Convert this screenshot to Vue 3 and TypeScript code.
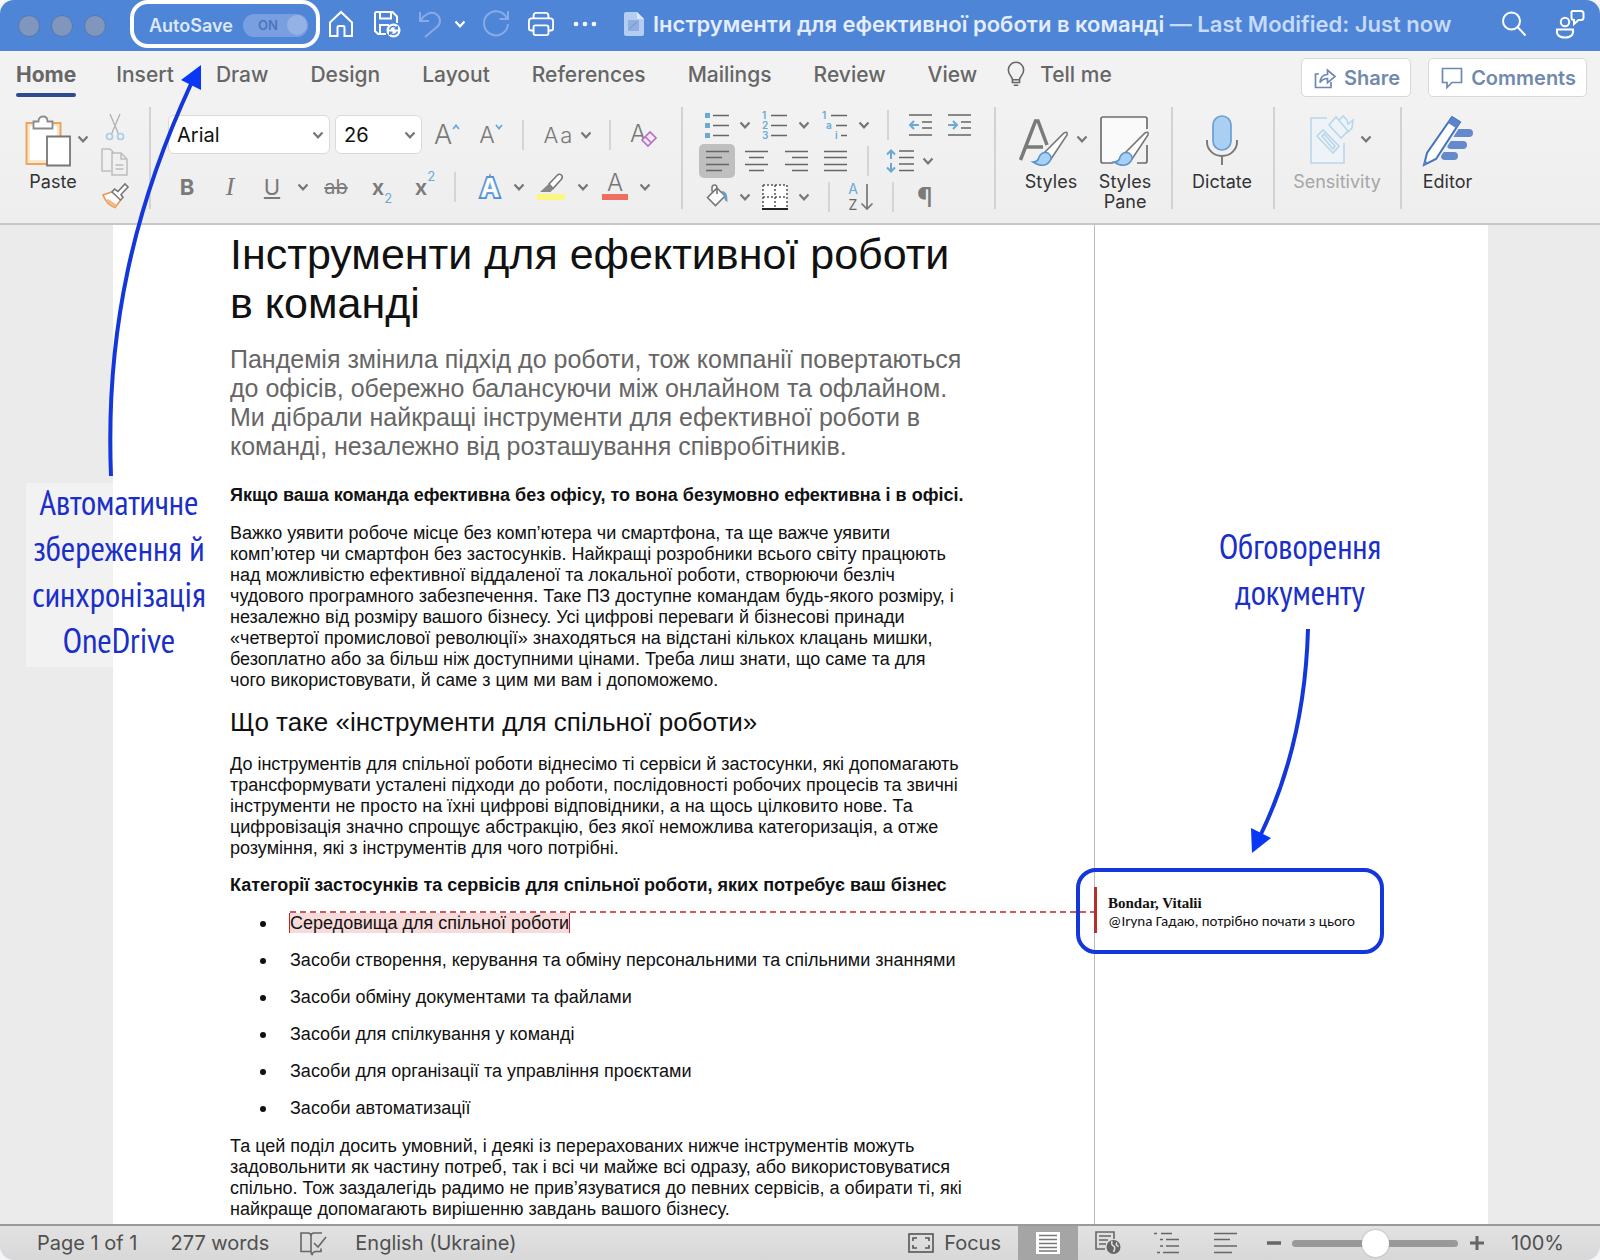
<script setup lang="ts">
import { h, ref } from 'vue'

const Chevron = () =>
  h('svg', { class: 'chevron', viewBox: '0 0 12 8', width: 12, height: 8, 'aria-hidden': 'true' }, [
    h('path', { d: 'M1.5 1.5 6 6.3 10.5 1.5', fill: 'none', stroke: 'currentColor', 'stroke-width': 2.2 }),
  ])

const autoSave = ref(true)
const font = ref('Arial')
const size = ref('26')
const zoom = ref(50)

const tabs = ['Home', 'Insert', 'Draw', 'Design', 'Layout', 'References', 'Mailings', 'Review', 'View']

const lead = [
  'Пандемія змінила підхід до роботи, тож компанії повертаються',
  'до офісів, обережно балансуючи між онлайном та офлайном.',
  'Ми дібрали найкращі інструменти для ефективної роботи в',
  'команді, незалежно від розташування співробітників.',
]
const intro = [
  'Важко уявити робоче місце без комп’ютера чи смартфона, та ще важче уявити',
  'комп’ютер чи смартфон без застосунків. Найкращі розробники всього світу працюють',
  'над можливістю ефективної віддаленої та локальної роботи, створюючи безліч',
  'чудового програмного забезпечення. Таке ПЗ доступне командам будь-якого розміру, і',
  'незалежно від розміру вашого бізнесу. Усі цифрові переваги й бізнесові принади',
  '«четвертої промислової революції» знаходяться на відстані кількох клацань мишки,',
  'безоплатно або за більш ніж доступними цінами. Треба лиш знати, що саме та для',
  'чого використовувати, й саме з цим ми вам і допоможемо.',
]
const tools = [
  'До інструментів для спільної роботи віднесімо ті сервіси й застосунки, які допомагають',
  'трансформувати усталені підходи до роботи, послідовності робочих процесів та звичні',
  'інструменти не просто на їхні цифрові відповідники, а на щось цілковито нове. Та',
  'цифровізація значно спрощує абстракцію, без якої неможлива категоризація, а отже',
  'розуміння, які з інструментів для чого потрібні.',
]
const categories = [
  'Засоби створення, керування та обміну персональними та спільними знаннями',
  'Засоби обміну документами та файлами',
  'Засоби для спілкування у команді',
  'Засоби для організації та управління проєктами',
  'Засоби автоматизації',
]
const outro = [
  'Та цей поділ досить умовний, і деякі із перерахованих нижче інструментів можуть',
  'задовольнити як частину потреб, так і всі чи майже всі одразу, або використовуватися',
  'спільно. Тож заздалегідь радимо не прив’язуватися до певних сервісів, а обирати ті, які',
  'найкраще допомагають вирішенню завдань вашого бізнесу.',
]
</script>

<template>
  <div class="window">
    <header class="titlebar">
      <div class="lights">
        <button aria-label="Close"></button>
        <button aria-label="Minimize"></button>
        <button aria-label="Zoom"></button>
      </div>
      <label class="autosave">
        <span>AutoSave</span>
        <span class="toggle">
          <input v-model="autoSave" type="checkbox" />
          <span class="on">ON</span>
          <span class="knob"></span>
        </span>
      </label>
      <div class="quick">
        <button aria-label="Home">
          <svg width="28" height="28" viewBox="0 0 28 28"><path d="M3 12.500 14 2l11 10.500V26h-7.500v-8.500q0-1.500-1.500-1.500h-4q-1.500 0-1.500 1.500V26H3z" /></svg>
        </button>
        <button aria-label="Save">
          <svg width="30" height="30" viewBox="0 0 30 30">
            <path d="M14 25H6l-3-3V4.500Q3 3 4.500 3h16L25 7.500V14M8 3v6.500h11V3M8 25v-9h9" />
            <circle cx="21.500" cy="21.500" r="7" fill="#fff" stroke="none" />
            <path class="sync" d="M17.500 20.500a4 4 0 0 1 7-1.500m.8-2v2.800h-2.800M25.500 22.500a4 4 0 0 1-7 1.500m-.8 2v-2.800h2.800" />
          </svg>
        </button>
        <button class="faded" aria-label="Undo">
          <svg width="24" height="28" viewBox="0 0 24 28"><path d="M2 2v9h9M2.500 10.500C7 4 13 1 18 4c5 3 5 9 1.500 12.500L7 27" /></svg>
        </button>
        <button class="white-chev" aria-label="Undo history"><Chevron /></button>
        <button class="faded" aria-label="Redo">
          <svg width="28" height="28" viewBox="0 0 28 28"><path d="M25 8.500A12 12 0 1 0 26 14M26 1v8h-8.500" /></svg>
        </button>
        <button aria-label="Print">
          <svg width="28" height="26" viewBox="0 0 30 28">
            <path d="M7 8V5q0-3 3-3h10q3 0 3 3v3M7 21H4.500Q2 21 2 18.500V11q0-3 3-3h20q3 0 3 3v7.500q0 2.500-2.500 2.500H23M9 15.500h12q2 0 2 2V24q0 2-2 2H9q-2 0-2-2v-6.500q0-2 2-2z" />
          </svg>
        </button>
        <button aria-label="More">
          <svg width="24" height="6" viewBox="0 0 24 6"><g fill="#fff" stroke="none"><circle cx="3" cy="3" r="2.300" /><circle cx="12" cy="3" r="2.300" /><circle cx="21" cy="3" r="2.300" /></g></svg>
        </button>
      </div>
      <div class="doc-title">
        <svg width="20" height="24" viewBox="0 0 20 24">
          <path d="M2 0h11l7 7v15q0 2-2 2H2q-2 0-2-2V2Q0 0 2 0z" fill="#b4cdf3" />
          <path d="M13 0v7h7" fill="#dbe7fb" /><rect x="4" y="8" width="11" height="11" rx="1" fill="#90aee0" /><path d="M5.500 17 13.500 9.500" stroke="#6d92d2" />
        </svg>
        <span>Інструменти для ефективної роботи в команді <span class="modified">— Last Modified: Just now</span></span>
      </div>
      <div class="right-tools">
        <button aria-label="Search">
          <svg width="26" height="28" viewBox="0 0 26 28"><circle cx="10.500" cy="11" r="8.500" /><path d="M17 17.500 24.500 25.500" /></svg>
        </button>
        <button aria-label="Collaborators">
          <svg width="30" height="30" viewBox="0 0 30 30">
            <circle cx="10" cy="13" r="4.200" /><path d="M2 20.500h16q1 8-8 8Q1 28.500 2 20.500zM18 2h8q2.500 0 2.500 2.500v4q0 2.500-2.500 2.500h-2.500l-4.500 4V11q-2.500 0-2.500-2.500v-4Q16 2 18 2z" />
          </svg>
        </button>
      </div>
    </header>

    <nav class="tabs">
      <a v-for="(t, i) in tabs" :key="t" href="#" :class="{ active: i === 0 }">{{ t }}</a>
      <a href="#" class="tell">
        <svg width="18" height="26" viewBox="0 0 20 28" fill="none" stroke="#666" stroke-width="1.700"><path d="M6 20.500c0-4-4.500-5.500-4.500-11a8.500 8.500 0 0 1 17 0c0 5.500-4.500 7-4.500 11zM6 20.500v3h8v-3M7.500 26.500h5" /></svg>
        <span>Tell me</span>
      </a>
      <div class="actions">
        <button>
          <svg width="22" height="22" viewBox="0 0 22 22"><path d="M5 7H1.500v13.500H17V15M6 15.500C6.500 10 9 7.500 13.500 7.500V3L21 9.500l-7.500 6.300V11.500C10 11.500 8 12.500 6 15.500z" /></svg>
          <span>Share</span>
        </button>
        <button>
          <svg width="22" height="22" viewBox="0 0 22 22"><path d="M1.500 1.500h19v14H11L6 20.500v-5H1.500z" /></svg>
          <span>Comments</span>
        </button>
      </div>
    </nav>

    <section class="ribbon" aria-label="Home ribbon">
      <div class="group clipboard">
        <button class="big">
          <svg width="56" height="52" viewBox="0 0 56 52" fill="#fff">
            <path d="M1.500 8h34v41h-34z" fill="#fde7cd" stroke="#eda45c" stroke-width="2" /><path d="M5 11h27v34H5z" />
            <path d="M8.500 13.500V6.500h5q0-5 4.500-5t4.500 5h5v7z" stroke="#8a8a8a" stroke-width="1.800" />
            <path d="M22 21.500h23v29H22z" stroke="#777" stroke-width="1.800" />
          </svg>
          <span>Paste</span>
        </button>
        <button class="drop" aria-label="Paste options"><Chevron /></button>
        <div class="stack">
          <button aria-label="Cut">
            <svg width="20" height="28" viewBox="0 0 20 28" fill="none" stroke="#b0b0b0" stroke-width="1.300"><path d="M5 1 13.500 21M15 1 6.500 21" /><g stroke="#a9cbe6" stroke-width="1.700"><circle cx="4.500" cy="23.500" r="3" /><circle cx="15.500" cy="23.500" r="3" /></g></svg>
          </button>
          <button aria-label="Copy">
            <svg width="28" height="28" viewBox="0 0 28 28" fill="none" stroke="#bdbdbd" stroke-width="1.500"><path d="M10 23H1V1h8l4 4M11 5h9l6 6v16H11zM20 5v6h6M14.500 17h8M14.500 21h8" /></svg>
          </button>
          <button aria-label="Format painter">
            <svg width="28" height="26" viewBox="0 0 28 26" fill="#fff"><path d="M2 12 12 8.500l8 8-6 8Q6 22 2 12z" stroke="#e8995a" stroke-width="1.700" /><path d="M6 17l9 6" stroke="#f3b883" stroke-width="3" /><path d="m11 9 2.500-3 3.500 2.500L24 1l3 3-7 7.500 2 3-2.500 2.500z" stroke="#777" stroke-width="1.600" /></svg>
          </button>
        </div>
      </div>

      <div class="group fonts">
        <div class="row f1">
          <div class="select">
            <select v-model="font" aria-label="Font"><option>Arial</option></select><Chevron />
          </div>
          <div class="select size">
            <select v-model="size" aria-label="Font size"><option>26</option></select><Chevron />
          </div>
          <button class="glyph up" aria-label="Increase font size"><span>A</span><svg width="8" height="6" viewBox="0 0 8 6"><path d="M1 5 4 1.500 7 5" /></svg></button>
          <button class="glyph down" aria-label="Decrease font size"><span>A</span><svg width="8" height="6" viewBox="0 0 8 6"><path d="M1 1 4 4.500 7 1" /></svg></button>
          <i class="sep"></i>
          <button class="glyph case" aria-label="Change case"><span>A</span><span>a</span></button>
          <button aria-label="Case options"><Chevron /></button>
          <i class="sep"></i>
          <button aria-label="Clear formatting">
            <svg width="28" height="32" viewBox="0 0 28 32"><text x="0" y="23" class="ic-a">A</text><path d="m12 21 8-8 6 6-8 8zM15.500 18l5.500 5.500" fill="#f5eafa" stroke="#b56fc9" stroke-width="1.700" /></svg>
          </button>
        </div>
        <div class="row f2">
          <button class="glyph" aria-label="Bold"><b>B</b></button>
          <button class="glyph serif" aria-label="Italic"><em>I</em></button>
          <button class="glyph" aria-label="Underline"><u>U</u></button>
          <button aria-label="Underline options"><Chevron /></button>
          <button class="glyph" aria-label="Strikethrough"><s>ab</s></button>
          <button class="glyph script" aria-label="Subscript"><span>x</span><sub>2</sub></button>
          <button class="glyph script" aria-label="Superscript"><span>x</span><sup>2</sup></button>
          <i class="sep"></i>
          <button class="glyph effect" aria-label="Text effects">A</button>
          <button aria-label="Effect options"><Chevron /></button>
          <button aria-label="Highlight">
            <svg width="28" height="28" viewBox="0 0 28 28"><path d="M0 21h28v6H0z" fill="#fbf67f" /><path d="M12 11 20.500 2q2-1.500 3.800 0t.3 4L16 15.500z" fill="#fff" stroke="#777" stroke-width="1.600" /><path d="m11.500 11 5 5-3 3H3z" fill="#888" /></svg>
          </button>
          <button aria-label="Highlight options"><Chevron /></button>
          <button aria-label="Font colour">
            <svg width="28" height="34" viewBox="0 0 28 34"><path d="M1 24h26v6H1z" fill="#ef6e63" /><text x="6" y="21" class="ic-a">A</text></svg>
          </button>
          <button aria-label="Font colour options"><Chevron /></button>
        </div>
      </div>

      <div class="group para">
        <div class="row p1">
          <button aria-label="Bullets"><svg width="26" height="26" viewBox="0 0 26 26"><path d="M9 3.500h16M9 13.500h16M9 23.500h16" class="ln" /><path d="M1 1h5v5H1zM1 11h5v5H1zM1 21h5v5H1z" fill="#6aa9d6" /></svg></button>
          <button aria-label="Bullet options"><Chevron /></button>
          <button aria-label="Numbering"><svg width="26" height="34" viewBox="0 0 26 34"><path d="M9 7.500h16M9 17.500h16M9 27.500h16" class="ln" /><g class="num"><text x="0" y="11">1</text><text x="0" y="21">2</text><text x="0" y="31">3</text></g></svg></button>
          <button aria-label="Numbering options"><Chevron /></button>
          <button aria-label="Multilevel list"><svg width="26" height="34" viewBox="0 0 26 34"><path d="M9 7.500h16M14 17.500h11M19 27.500h6" class="ln" /><g class="num"><text x="0" y="11">1</text><text x="4" y="21">a</text><text x="13" y="31">i</text></g></svg></button>
          <button aria-label="Multilevel options"><Chevron /></button>
          <i class="sep"></i>
          <button aria-label="Decrease indent"><svg width="24" height="24" viewBox="0 0 24 24"><path d="M1 2h23M14 9h10M14 15h10M1 22h23" class="ln" /><path d="M11 12H2M6 8l-4 4 4 4" class="bl" /></svg></button>
          <button aria-label="Increase indent"><svg width="24" height="24" viewBox="0 0 24 24"><path d="M1 2h23M14 9h10M14 15h10M1 22h23" class="ln" /><path d="M1 12h9M6 8l4 4-4 4" class="bl" /></svg></button>
        </div>
        <div class="row p2">
          <button class="pressed" aria-label="Align left"><svg width="24" height="22" viewBox="0 0 24 22"><path d="M1 1.500h23M1 7.500h16M1 14.500h23M1 20.500h16" class="ln" /></svg></button>
          <button aria-label="Centre"><svg width="24" height="22" viewBox="0 0 24 22"><path d="M0 1.500h23M4 7.500h15M0 14.500h23M4 20.500h15" class="ln" /></svg></button>
          <button aria-label="Align right"><svg width="24" height="22" viewBox="0 0 24 22"><path d="M0 1.500h23M7 7.500h16M0 14.500h23M7 20.500h16" class="ln" /></svg></button>
          <button aria-label="Justify"><svg width="24" height="22" viewBox="0 0 24 22"><path d="M0 1.500h23M0 7.500h23M0 14.500h23M0 20.500h23" class="ln" /></svg></button>
          <i class="sep"></i>
          <button aria-label="Line spacing"><svg width="28" height="24" viewBox="0 0 28 24"><path d="M13 2h15M13 8.500h15M13 15h15M13 21.500h15" class="ln" /><path d="M5 10V2M1 5.500 5 1.500l4 4M5 14v8M1 18.500l4 4 4-4" class="bl" /></svg></button>
          <button aria-label="Line spacing options"><Chevron /></button>
        </div>
        <div class="row p3">
          <button aria-label="Shading"><svg width="24" height="26" viewBox="0 0 24 26"><path d="M7 7.500V4q0-3 2.500-3T12 4v6M12 4l8 8-9.500 9.500L2.500 13.500z" fill="#fff" stroke="#777" stroke-width="1.600" /><path d="M16 7q7-1 6.500 11-3.500-1-3.500-6z" fill="#6a9cc8" /></svg></button>
          <button aria-label="Shading options"><Chevron /></button>
          <button aria-label="Borders"><svg width="26" height="26" viewBox="0 0 26 26"><path d="M1 1h24v24H1z" fill="#fff" /><path d="M1 1h24v24M1 1v24M13 1v24M1 13h24" fill="none" stroke="#555" stroke-width="1.500" stroke-dasharray="2 2" /><path d="M0 25h26" stroke="#222" stroke-width="2" /></svg></button>
          <button aria-label="Border options"><Chevron /></button>
          <i class="sep"></i>
          <button aria-label="Sort">
            <span class="az"><span>A</span><span>Z</span></span>
            <svg width="14" height="28" viewBox="0 0 14 28"><path d="M7 1v25M1.500 20.500 7 26l5.500-5.500" fill="none" stroke="#777" stroke-width="1.700" /></svg>
          </button>
          <i class="sep"></i>
          <button class="glyph pilcrow" aria-label="Show paragraph marks">¶</button>
        </div>
      </div>

      <div class="group styles">
        <button class="big">
          <svg width="64" height="52" viewBox="0 0 64 52">
            <path d="M1.500 45 16.500 6h2.500l9 24M7 32h17" fill="none" stroke="#7a7a7a" stroke-width="3.500" />
            <path d="M25 38 45 18q4-2 3 2L32 44z" fill="#fff" stroke="#777" stroke-width="1.600" />
            <path d="M14 47q5 0 6-5 3-6 9-4 5 4 2 8-6 8-17 1z" fill="#a6d0f5" stroke="#5b94cc" stroke-width="1.600" />
          </svg>
          <span>Styles</span>
        </button>
        <button class="drop" aria-label="Style options"><Chevron /></button>
        <button class="big pane">
          <svg width="50" height="52" viewBox="0 0 50 52">
            <rect x="1" y="2" width="46" height="46" rx="2" fill="#fafafa" stroke="#6f6f6f" stroke-width="1.700" />
            <path d="M12 50 46 14h4v38H12z" fill="#f2f2f2" /><path d="M47 30v16q0 2-2 2h-8" fill="none" stroke="#6f6f6f" stroke-width="1.700" />
            <path d="M25 38 45 18q4-2 3 2L32 44z" fill="#fff" stroke="#777" stroke-width="1.600" />
            <path d="M14 47q5 0 6-5 3-6 9-4 5 4 2 8-6 8-17 1z" fill="#a6d0f5" stroke="#5b94cc" stroke-width="1.600" />
          </svg>
          <span>Styles<br />Pane</span>
        </button>
      </div>

      <div class="group dictate">
        <button class="big">
          <svg width="34" height="52" viewBox="0 0 34 52"><rect x="8" y="1" width="18" height="34" rx="9" fill="#a9d0f3" stroke="#6a9fd4" stroke-width="1.700" /><path d="M2 25v2a15 14 0 0 0 30 0v-2M17 41v9" fill="none" stroke="#777" stroke-width="1.900" /></svg>
          <span>Dictate</span>
        </button>
      </div>

      <div class="group sensitivity">
        <button class="big" disabled>
          <svg width="56" height="52" viewBox="0 0 56 52" fill="#eef3f7" stroke="#b9d6ea" stroke-width="1.600">
            <path d="M18 3H2v45h33V28" /><path d="m8 21 6-6 16 16-6 7zM13 21l2-2 11 12-2 3z" /><path d="m20 10 7-8 12 14-7 7zM30 5l4-4 4 4 1 4 5-4-1 8-5 5" />
          </svg>
          <span>Sensitivity</span>
        </button>
        <button class="drop" aria-label="Sensitivity options"><Chevron /></button>
      </div>

      <div class="group editor">
        <button class="big">
          <svg width="54" height="52" viewBox="0 0 54 52">
            <path d="M34 18h14M30 30h12M24 41h9" stroke="#6489cc" stroke-width="8" stroke-linecap="round" />
            <path d="M31 2 39 7 15 44 3 50 6 38z" fill="#fff" stroke="#f2f2f2" stroke-width="5" />
            <path d="M31 2 39 7 15 44 3 50 6 38z" fill="#fff" stroke="#4472c0" stroke-width="2" /><path d="m31 2 8 5-4 6-8-5zM4 45l3 3-4.500 2z" fill="#5b84cb" />
          </svg>
          <span>Editor</span>
        </button>
      </div>
    </section>

    <main class="document">
      <article class="sheet">
        <h1>Інструменти для ефективної роботи<br />в команді</h1>
        <p class="lead"><template v-for="l in lead" :key="l">{{ l }}<br /></template></p>
        <h3>Якщо ваша команда ефективна без офісу, то вона безумовно ефективна і в офісі.</h3>
        <p><template v-for="l in intro" :key="l">{{ l }}<br /></template></p>
        <h2>Що таке «інструменти для спільної роботи»</h2>
        <p><template v-for="l in tools" :key="l">{{ l }}<br /></template></p>
        <h3>Категорії застосунків та сервісів для спільної роботи, яких потребує ваш бізнес</h3>
        <ul>
          <li class="commented"><mark>Середовища для спільної роботи</mark></li>
          <li v-for="c in categories" :key="c">{{ c }}</li>
        </ul>
        <p class="last"><template v-for="l in outro" :key="l">{{ l }}<br /></template></p>
      </article>

      <aside class="margin">
        <p class="note discuss">Обговорення<br />документу</p>
        <svg class="arrow-down" width="70" height="232" viewBox="0 0 70 232" aria-hidden="true">
          <path d="M64 4C62 76 49 143 17 209" fill="none" stroke="#1437dc" stroke-width="4" /><path d="M8 228 7 203l20 10z" fill="#0a37f5" />
        </svg>
        <div class="balloon">
          <div class="comment"><b>Bondar, Vitalii</b><span>@Iryna Гадаю, потрібно почати з цього</span></div>
        </div>
      </aside>

      <p class="note sync-note">Автоматичне<br />збереження й<br />синхронізація<br />OneDrive</p>
    </main>

    <footer class="status">
      <span class="pages">Page 1 of 1</span>
      <span class="words">277 words</span>
      <button class="proof" aria-label="Proofing">
        <svg width="28" height="24" viewBox="0 0 28 24" fill="none" stroke="#666" stroke-width="1.600"><path d="M12 20.500H2V2h7q3 0 3 3zq0 2 1 3 1-3 4-3h5v-3M12 5q0-3 3-3h8M15 12l4 4 8-10" /></svg>
      </button>
      <span>English (Ukraine)</span>
      <div class="views">
        <button class="focus">
          <svg width="26" height="20" viewBox="0 0 26 20" fill="none" stroke="#555" stroke-width="1.600"><rect x="1" y="1" width="24" height="18" /><path d="M5 8V5h4M17 5h4v3M21 12v3h-4M9 15H5v-3" /></svg>
          <span>Focus</span>
        </button>
        <button class="view on-view" aria-label="Print layout">
          <svg width="24" height="22" viewBox="0 0 24 22"><path d="M0 0h24v22H0z" fill="#fff" /><path d="M3 3.500h18M3 7.500h18M3 11.500h18M3 15.500h18M3 19h18" stroke="#777" stroke-width="1.500" /></svg>
        </button>
        <button class="view" aria-label="Web layout">
          <svg width="26" height="24" viewBox="0 0 26 24" fill="none" stroke="#666" stroke-width="1.600"><path d="M10 18H1V1h18v7M4 5h12M4 9h9M4 13h7" /><circle cx="18.500" cy="16" r="7" fill="#666" stroke="none" /><path d="M17 10q-1 4 1.500 5t0 6M22 11.500q-2 2 1.500 4" stroke="#ddd" /></svg>
        </button>
        <button class="view" aria-label="Outline">
          <svg width="26" height="22" viewBox="0 0 26 22" stroke="#666" stroke-width="1.700"><path d="M0 1.500h3M7 1.500h11M6 7.500h3M12 7.500h13M6 14h3M12 14h13M3 20.500h3M9 20.500h16" /></svg>
        </button>
        <button class="view" aria-label="Draft">
          <svg width="24" height="22" viewBox="0 0 24 22" stroke="#666" stroke-width="1.700"><path d="M0 1.500h23M0 7.500h16M0 14h23M0 20.500h18" /></svg>
        </button>
        <button class="step" aria-label="Zoom out"><svg width="14" height="14" viewBox="0 0 14 14"><path d="M0 7h14" stroke="#666" stroke-width="3.500" /></svg></button>
        <input v-model="zoom" type="range" min="0" max="100" aria-label="Zoom" />
        <button class="step" aria-label="Zoom in"><svg width="14" height="14" viewBox="0 0 14 14"><path d="M0 7h14M7 0v14" stroke="#666" stroke-width="3" /></svg></button>
        <span class="pct">100%</span>
      </div>
    </footer>

    <svg class="arrow-up" width="110" height="420" viewBox="0 0 110 420" aria-hidden="true">
      <path d="M11 416C5 270 35 145 91 24" fill="none" stroke="#1437dc" stroke-width="4" /><path d="M101 5 81 20l20 10z" fill="#0a37f5" />
    </svg>
  </div>
</template>

<style>
html,
body {
  margin: 0;
  background: #f4f6fa;
}
</style>

<style scoped>
.window {
  position: relative;
  min-height: 100vh;
  display: flex;
  flex-direction: column;
  overflow: hidden;
  border-radius: 14px;
  background: #f2f2f2;
  color: #666;
  font-family: Inter, 'Noto Sans', sans-serif;
}
button {
  display: inline-flex;
  align-items: center;
  justify-content: center;
  padding: 0;
  border: 0;
  background: none;
  color: inherit;
  font: inherit;
}
svg {
  display: block;
  flex: none;
  overflow: visible;
}
a {
  color: inherit;
  text-decoration: none;
}
.chevron {
  color: #777;
}

.titlebar {
  display: flex;
  align-items: center;
  height: 51px;
  background: #4f85d7;
}
.lights {
  display: flex;
  gap: 11px;
  margin-left: 18px;
}
.lights button {
  width: 22px;
  height: 22px;
  border: 1px solid #5877ac;
  border-radius: 50%;
  background: #8096bd;
}
.autosave {
  display: flex;
  align-items: center;
  justify-content: space-between;
  box-sizing: border-box;
  width: 190px;
  height: 48px;
  margin: 0 7px 3px 24px;
  padding: 2px 8px 0 15px;
  border: 4px solid #fff;
  border-radius: 18px;
  color: #dce8fb;
  font-size: 18px;
  font-weight: 600;
}
.toggle {
  display: flex;
  align-items: center;
  justify-content: space-between;
  position: relative;
  box-sizing: border-box;
  width: 65px;
  height: 23px;
  padding: 0 1px 0 15px;
  border-radius: 12px;
  background: #7a9fe0;
}
.toggle input {
  position: absolute;
  inset: 0;
  margin: 0;
  opacity: 0;
}
.on {
  color: #4a75bd;
  font-size: 13px;
}
.knob {
  width: 20px;
  height: 20px;
  border-radius: 50%;
  background: #95b2e6;
}
.quick,
.right-tools {
  display: flex;
  align-items: center;
  height: 48px;
  margin-bottom: 3px;
}
.quick svg,
.right-tools svg {
  fill: none;
  stroke: #fff;
  stroke-width: 2;
}
.quick button {
  width: 32px;
}
.quick button:nth-child(1) {
  width: 28px;
}
.quick button:nth-child(2) {
  width: 64px;
}
.quick button:nth-child(3) {
  width: 22px;
}
.quick button:nth-child(4) {
  width: 38px;
}
.quick button:nth-child(5) {
  width: 34px;
}
.quick button:nth-child(6) {
  width: 56px;
}
.quick .faded svg {
  stroke: #86abe8;
}
.quick .sync {
  stroke: #4f85d7;
  stroke-width: 1.5;
}
.white-chev .chevron {
  color: #fff;
}
.doc-title {
  display: flex;
  align-items: center;
  gap: 9px;
  height: 48px;
  margin: 0 0 3px 23px;
  color: #e3edfd;
  font-size: 22px;
  font-weight: 600;
  white-space: nowrap;
}
.modified {
  color: #c6dafa;
}
.right-tools {
  gap: 28px;
  margin-right: 15px;
  margin-left: auto;
}

.tabs {
  display: flex;
  height: 56px;
  font-size: 21px;
  font-weight: 500;
  line-height: 28px;
  white-space: nowrap;
}
.tabs a {
  height: 28px;
  margin-top: 10px;
  margin-right: 42px;
}
.tabs a.active {
  position: relative;
  margin-right: 40px;
  margin-left: 16px;
  font-weight: 700;
}
.tabs a.active::after {
  position: absolute;
  right: 0;
  bottom: -8px;
  left: 0;
  height: 4px;
  border-radius: 2px;
  background: #2f4b8f;
  content: '';
}
.tabs a.tell {
  display: flex;
  gap: 15px;
  margin-left: -12px;
}
.actions {
  display: flex;
  gap: 17px;
  margin: 7px 13px 0 auto;
  font-size: 20px;
}
.actions button {
  gap: 8px;
  box-sizing: border-box;
  height: 39px;
  padding: 0 10px 0 12px;
  border: 1px solid #d8d8d8;
  border-radius: 5px;
  background: #fff;
  color: #7189ae;
  font-weight: 600;
}
.actions svg {
  fill: none;
  stroke: #6e87b4;
  stroke-width: 1.7;
}

.ribbon {
  display: flex;
  height: 102px;
  padding-bottom: 14px;
  border-bottom: 2px solid #c6c6c6;
  background: linear-gradient(#f2f2f2, #eeeeee);
  color: #7a7a7a;
  font-size: 18px;
}
.group {
  display: flex;
  box-sizing: border-box;
  flex: none;
  height: 102px;
  border-right: 2px solid #d2d2d2;
}
.big {
  flex: none;
  flex-direction: column;
  justify-content: flex-start;
  gap: 5px;
  margin-top: 8px;
  color: #333;
  font-size: 18px;
  line-height: 20px;
}
.drop {
  align-self: flex-start;
  height: 12px;
  margin-top: 26px;
}
.clipboard {
  width: 151px;
}
.clipboard .big {
  width: 56px;
  margin-left: 25px;
}
.clipboard .drop {
  margin-left: -4px;
}
.clipboard .stack {
  display: flex;
  flex-direction: column;
  align-items: center;
  justify-content: space-between;
  width: 36px;
  margin-left: 8px;
  padding-top: 6px;
}
.fonts {
  flex-direction: column;
  gap: 15px;
  width: 532px;
  padding: 8px 0 0 17px;
}
.row {
  display: grid;
  flex: none;
  align-items: center;
  justify-items: center;
}
.row button {
  width: 100%;
  height: 100%;
}
.sep {
  width: 2px;
  height: 30px;
  background: #d5d5d5;
}
.f1 {
  grid-template-columns: 162px 5px 87px 50px 38px 26px 44px 12px 36px 32px;
  height: 39px;
}
.f1 .size {
  grid-column: 3;
}
.f2 {
  grid-template-columns: 38px 48px 36px 26px 40px 52px 34px 26px 44px 14px 50px 14px 50px 10px;
  height: 36px;
}
.para {
  flex-direction: column;
  gap: 2px;
  width: 313px;
  padding: 1px 0 0 16px;
}
.para .row {
  height: 34px;
}
.p1 {
  grid-template-columns: 36px 20px 40px 18px 44px 14px 34px 30px 48px;
}
.p2 {
  grid-template-columns: 36px 44px 36px 42px 22px 42px 14px;
}
.p3 {
  grid-template-columns: 36px 20px 40px 18px 32px 32px 32px 32px;
}
.select {
  position: relative;
  width: 100%;
  height: 39px;
}
.select select {
  box-sizing: border-box;
  width: 100%;
  height: 39px;
  padding: 0 24px 0 8px;
  border: 1px solid #dadada;
  border-radius: 6px;
  background: #fff;
  appearance: none;
  color: #111;
  font-family: Inter, sans-serif;
  font-size: 20px;
}
.select .chevron {
  position: absolute;
  top: 16px;
  right: 6px;
}
.glyph {
  font-size: 22px;
}
.glyph svg {
  align-self: flex-start;
  margin-top: 9px;
  fill: none;
  stroke: #6aa9d6;
  stroke-width: 1.8;
}
.up,
.down,
.case {
  font-weight: 300;
}
.up {
  font-size: 27px;
}
.down {
  font-size: 23px;
}
.case {
  gap: 2px;
}
.serif {
  font-family: 'Liberation Serif', serif;
  font-size: 26px;
}
.glyph s {
  font-size: 20px;
}
.script {
  font-weight: 600;
}
.script sub,
.script sup {
  color: #6aa9d6;
  font-size: 13px;
  font-weight: 400;
  line-height: 14px;
}
.script sub {
  align-self: flex-end;
}
.script sup {
  align-self: flex-start;
}
.effect {
  color: #fff;
  font-size: 26px;
  font-weight: 600;
  -webkit-text-stroke: 4px #4a8bcf;
  paint-order: stroke;
  text-shadow: 0 0 3px #a8cdf0;
}
.pilcrow {
  font-size: 27px;
}
.ic-a {
  fill: #777;
  font-size: 24px;
  font-weight: 300;
}
.num text {
  fill: #6aa9d6;
  font-size: 10px;
  font-weight: 600;
}
.az {
  display: flex;
  flex-direction: column;
  margin-right: 2px;
  color: #6aa9d6;
  font-size: 14px;
  line-height: 16px;
}
.az span + span {
  color: #666;
}
.ln {
  fill: none;
  stroke: #666;
  stroke-width: 1.7;
}
.bl {
  fill: none;
  stroke: #6aa9d6;
  stroke-width: 2;
}
.pressed {
  border-radius: 5px;
  background: #bfbfbf;
}
.styles {
  width: 177px;
  padding-left: 24px;
}
.styles .big {
  width: 62px;
}
.styles .pane {
  width: 50px;
  margin-left: 12px;
}
.styles .drop {
  width: 12px;
  margin-left: -6px;
}
.dictate {
  justify-content: center;
  width: 102px;
  padding-right: 2px;
}
.sensitivity {
  width: 127px;
  padding-left: 17px;
}
.sensitivity .big {
  width: 90px;
  color: #a6a6a6;
}
.sensitivity .drop {
  margin-left: -22px;
}
.editor {
  width: 94px;
  justify-content: center;
  padding-right: 3px;
  border: 0;
}

.document {
  position: relative;
  display: grid;
  grid-template-columns: 113px 1fr 394px 112px;
  flex: 1;
  background: #ebebeb;
}
.sheet {
  grid-column: 2;
  padding: 5px 0 3px 117px;
  background: #fff;
  color: #111;
  font-family: 'Liberation Sans', Arial, sans-serif;
  font-size: 18px;
  line-height: 21px;
  white-space: nowrap;
}
.sheet h1 {
  margin: 0 0 17px;
  font-size: 43px;
  font-weight: 400;
  line-height: 49px;
}
.sheet .lead {
  margin: 0 0 24px;
  color: #666;
  font-size: 25px;
  line-height: 29px;
}
.sheet h3 {
  margin: 0 0 17px;
  font-size: 18px;
  line-height: 21px;
}
.sheet p {
  margin: 0 0 16px;
}
.sheet h2 {
  margin: 0 0 16px;
  font-size: 26px;
  font-weight: 400;
  line-height: 31px;
}
.sheet ul {
  margin: 0 0 17px;
  padding-left: 60px;
  list-style: none;
}
.sheet li {
  position: relative;
  margin-bottom: 16px;
}
.sheet li::before {
  position: absolute;
  top: 8px;
  left: -30px;
  width: 6px;
  height: 6px;
  border-radius: 50%;
  background: #111;
  content: '';
}
.commented::after {
  position: absolute;
  top: -2px;
  right: 0;
  left: 0;
  height: 2px;
  background: repeating-linear-gradient(90deg, #cc5a60 0 6px, transparent 6px 10px);
  content: '';
}
mark {
  box-shadow: -1px 0 #c0202a, 1px 0 #c0202a;
  background: #f7dada;
  color: inherit;
}
.sheet .last {
  margin: 0;
}
.margin {
  position: relative;
  border-left: 1px solid #bdbdbd;
  background: #fff;
}
.note {
  position: absolute;
  margin: 0;
  color: #1a2fc8;
  font-family: 'PT Sans Narrow', 'Open Sans Condensed', 'Roboto Condensed', 'Liberation Sans Narrow', 'Noto Sans', sans-serif;
  font-size: 35px;
  line-height: 46px;
  text-align: center;
  white-space: nowrap;
}
.discuss {
  top: 298px;
  left: 104px;
  width: 202px;
}
.sync-note {
  top: 254px;
  left: 26px;
  width: 176px;
  padding: 0 0 4px 5px;
  background: linear-gradient(transparent 4px, rgba(255, 255, 255, 0.35) 4px);
}
.arrow-down {
  position: absolute;
  top: 400px;
  left: 149px;
}
.balloon {
  position: absolute;
  top: 643px;
  left: -19px;
  box-sizing: border-box;
  width: 308px;
  height: 86px;
  padding: 15px 0 0 14px;
  border: 4px solid #1437dc;
  border-radius: 20px;
}
.comment {
  display: flex;
  flex-direction: column;
  height: 46px;
  padding-left: 11px;
  border-left: 3px solid #b8302e;
  color: #111;
  font-family: Carlito, Lato, 'Noto Sans', sans-serif;
  font-size: 15px;
  line-height: 18px;
  white-space: nowrap;
}
.comment b {
  padding-top: 7px;
  font-family: 'Liberation Serif', serif;
  font-size: 15px;
}
.arrow-up {
  position: absolute;
  top: 60px;
  left: 100px;
  pointer-events: none;
}

.status {
  display: flex;
  align-items: center;
  box-sizing: border-box;
  height: 36px;
  padding-left: 37px;
  border-top: 2px solid #9a9a9a;
  background: linear-gradient(#e2e2e2, #d8d8d8);
  color: #505050;
  font-size: 20px;
  white-space: nowrap;
}
.pages {
  margin-right: 33px;
}
.words {
  margin-right: 30px;
}
.proof {
  margin-right: 28px;
}
.views {
  display: flex;
  align-items: center;
  height: 100%;
  margin-left: auto;
}
.focus {
  gap: 10px;
  margin-right: 17px;
}
.view {
  width: 59px;
  height: 100%;
}
.on-view {
  width: 60px;
  background: #a5a5a5;
}
.step {
  width: 14px;
  margin-left: 12px;
}
.views input {
  width: 166px;
  height: 28px;
  margin: 0 0 0 11px;
  background: none;
  appearance: none;
}
.views input::-webkit-slider-runnable-track {
  height: 7px;
  border-radius: 4px;
  background: #999;
}
.views input::-webkit-slider-thumb {
  width: 27px;
  height: 27px;
  margin-top: -10px;
  border-radius: 50%;
  background: #fff;
  box-shadow: 0 0 2px #999;
  appearance: none;
}
.pct {
  width: 89px;
  margin-left: 27px;
}
</style>
